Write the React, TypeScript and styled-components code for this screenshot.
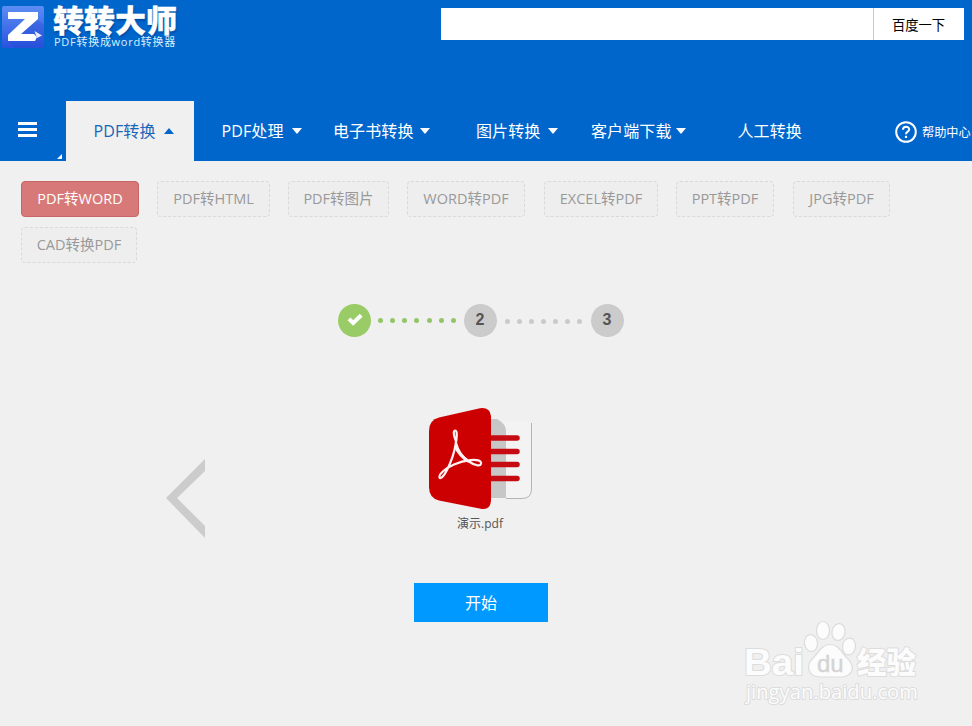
import React from 'react';
import styled, { createGlobalStyle } from 'styled-components';

const GlobalStyle = createGlobalStyle`
  * { box-sizing: border-box; }
  body {
    margin: 0;
    overflow: hidden;
    background: #f0f0f0;
    font-family: 'Open Sans', 'Noto Sans CJK SC', sans-serif;
  }
  button, input { font: inherit; margin: 0; padding: 0; }
`;

const Page = styled.div`
  position: relative;
  width: 972px;
  height: 726px;
  overflow: hidden;
  background: #f0f0f0;
`;

const Header = styled.header`
  height: 161px;
  display: flex;
  flex-direction: column;
  justify-content: space-between;
  background: #0066cc;
`;

const TopBar = styled.div`
  display: flex;
  justify-content: space-between;
  align-items: flex-start;
  padding-right: 8px;
`;

const Brand = styled.div`
  display: flex;
  padding: 5px 0 0 1px;
`;

const BrandText = styled.div`
  display: flex;
  flex-direction: column;
  margin-left: 8px;
  color: #fff;
  white-space: nowrap;
`;

const BrandName = styled.span`
  height: 29px;
  font: 900 31px/28px 'Noto Sans CJK SC', sans-serif;
  -webkit-text-stroke: 0.3px #fff;
  text-shadow: 1px 2px 2px rgba(0, 25, 90, 0.35);
`;

const BrandTagline = styled.span`
  margin-left: 1px;
  font-size: 11px;
  line-height: 15px;
  letter-spacing: 0.72px;
  color: #d9efff;
`;

const SearchBox = styled.form`
  display: flex;
  margin-top: 8px;
  width: 523px;
  height: 32px;
  background: #fff;
`;

const SearchInput = styled.input`
  width: 433px;
  border: 0;
  border-right: 1px solid #ccc;
  outline: none;
  background: #fff;
`;

const SearchButton = styled.button`
  flex: 1;
  border: 0;
  background: #fff;
  color: #000;
  font-size: 13.3px;
  padding-right: 1px;
`;

const NavBar = styled.nav`
  display: flex;
  height: 60px;
`;

const MenuToggle = styled.div`
  display: flex;
  justify-content: space-between;
  width: 66px;
  padding: 21px 4px 2px 18px;
`;

const MenuLines = styled.div`
  width: 19px;
  height: 15px;
  display: flex;
  flex-direction: column;
  justify-content: space-between;
`;

const MenuLine = styled.i`
  height: 3px;
  background: #fff;
`;

const Corner = styled.i`
  align-self: flex-end;
  border-bottom: 5px solid #fff;
  border-left: 5px solid transparent;
`;

const Tab = styled.a<{ $active?: boolean; $inset: number; $gap: number }>`
  display: flex;
  align-items: center;
  gap: ${p => p.$gap}px;
  width: 128px;
  padding-left: ${p => p.$inset}px;
  background: ${p => (p.$active ? '#f0f0f0' : 'transparent')};
  color: ${p => (p.$active ? '#1a66b8' : '#fff')};
  font-size: 16px;
  letter-spacing: 0.1px;
  white-space: nowrap;
`;

const TabLabel = styled.span`
  padding-bottom: 2px;
`;

const Caret = styled.i<{ $up?: boolean }>`
  border-left: 5px solid transparent;
  border-right: 5px solid transparent;
  ${p => (p.$up ? 'border-bottom: 6px solid #0066cc;' : 'border-top: 6px solid #fff;')}
`;

const Help = styled.a`
  display: flex;
  align-items: center;
  gap: 5px;
  margin-left: 61px;
  padding-top: 2px;
  color: #fff;
  font-size: 12.2px;
  white-space: nowrap;
`;

const Chips = styled.div`
  display: flex;
  flex-wrap: wrap;
  gap: 10px 18px;
  padding: 20px 60px 0 21px;
`;

const Chip = styled.button<{ $width: number; $indent?: number; $active?: boolean }>`
  width: ${p => p.$width}px;
  height: 36px;
  margin-left: ${p => p.$indent ?? 0}px;
  padding-bottom: 4px;
  border: 1px ${p => (p.$active ? 'solid #c86666' : 'dashed #d9d9d9')};
  border-radius: 4px;
  background: ${p => (p.$active ? '#d77979' : '#eeeeee')};
  color: ${p => (p.$active ? '#fff' : '#999')};
  font-size: 14.5px;
  white-space: nowrap;
`;

const Steps = styled.div`
  display: flex;
  align-items: center;
  width: 287px;
  height: 33px;
  margin: 40.5px 0 0 338px;
`;

const Step = styled.div<{ $done?: boolean }>`
  display: flex;
  align-items: center;
  justify-content: center;
  width: 33px;
  height: 33px;
  padding-right: 1px;
  border-radius: 50%;
  background: ${p => (p.$done ? '#99cc66' : '#cbcbcb')};
  color: #555;
  font: bold 16px 'Liberation Sans', sans-serif;
`;

const Dots = styled.div<{ $done?: boolean }>`
  display: flex;
  justify-content: space-between;
  width: ${p => (p.$done ? 93 : 94)}px;
  padding: ${p => (p.$done ? '0 8px 0 7px' : '2px 9px 0 8px')};
`;

const Dot = styled.i<{ $done?: boolean }>`
  width: 5px;
  height: 5px;
  border-radius: 50%;
  background: ${p => (p.$done ? '#93c567' : '#cacaca')};
`;

const Stage = styled.div`
  display: flex;
  height: 132px;
  margin: 70.5px 0 0 165px;
`;

const PreviousButton = styled.a`
  height: 80px;
  margin-top: 52px;
`;

const FileCard = styled.div`
  display: flex;
  flex-direction: column;
  align-items: center;
  width: 106px;
  margin-left: 222px;
`;

const FileName = styled.span`
  margin-top: 4px;
  color: #555;
  font-size: 12px;
  line-height: 18px;
`;

const StartButton = styled.button`
  display: block;
  width: 134px;
  height: 39px;
  margin: 44px 0 0 414px;
  padding-bottom: 2px;
  border: 0;
  background: #0099ff;
  color: #fff;
  font-size: 16px;
`;

const Watermark = styled.svg`
  position: absolute;
  left: 735px;
  top: 612px;
`;

const LogoMark = () => (
  <svg width="44" height="44" viewBox="0 0 44 44">
    <defs>
      <linearGradient id="tile" x2="0" y2="1">
        <stop stopColor="#5c8df3" />
        <stop offset="1" stopColor="#2953df" />
      </linearGradient>
    </defs>
    <rect x="1" y="1" width="42" height="42" rx="2" fill="url(#tile)" />
    <path d="M37 15L43 20V43H14L7 36Z" fill="#2349cc" opacity=".3" />
    <path d="M7 7H37V14L20 29H33L36 32L34 36H7V30L24 14H7Z" fill="#fff" />
    <path d="M33.5 26L41 30.5L36 33Z" fill="#e8eeff" />
  </svg>
);

const HelpIcon = () => (
  <svg width="22" height="22" viewBox="0 0 22 22" fill="none" stroke="#fff">
    <circle cx="11" cy="11" r="9.8" strokeWidth="2" />
    <path d="M8 8.8C8 4.8 14.2 4.9 14.2 8.5C14.2 10.8 11 10.5 11 13.2" strokeWidth="2" />
    <path d="M11 14.8V17" strokeWidth="2.2" />
  </svg>
);

const CheckIcon = () => (
  <svg width="17" height="14" viewBox="0 0 17 14">
    <path d="M3 5.8L7.2 10L15.2 2.3" fill="none" stroke="#fff" strokeWidth="4" />
  </svg>
);

const PdfIcon = () => (
  <svg width="106" height="104" viewBox="0 0 106 104">
    <path d="M63 14H96Q105 14 105 24V82Q105 92 95 92H63" fill="#f3f3f3" />
    <path d="M104.5 16V82Q104.5 91.5 95 91.5H79" fill="none" stroke="#b5b5b5" strokeWidth="1" />
    <path d="M61 12H70Q79 17 79 24V91H61Z" fill="#c7c7c7" />
    <path d="M62 31H90M62 44.5H90M62 57.5H90M62 71.5H90" stroke="#c60b12" strokeWidth="5.5" strokeLinecap="round" />
    <path d="M12 10.5L53 1.2Q63 0 64 9V94Q63 103 55 102L12 93.5Q2 91 2 80V24Q2 13 12 10.5Z" fill="#cc0000" />
    <g fill="none" stroke="#fff1f1" strokeLinecap="round" strokeLinejoin="round">
      <path d="M28.5 33C26 27 26.5 23.5 28.2 23.5C30.5 23.5 30 31 28.5 38C27 47 24 55 20 63C17 69 13.5 72.5 12.5 70.5C11.5 67 19 61 27 57.5C37 53 52 51 54 55.5C55 60 48 59 42 54.5C35 50 31 44 28.7 35" strokeWidth="2.2" />
      <path d="M28.5 40C32 47 36 51 41 54" strokeWidth="2.8" />
    </g>
  </svg>
);

const BaiduWatermark = () => (
  <Watermark width="190" height="100" viewBox="0 0 190 100">
    <g fill="#fcfcfc" stroke="#dcdcdc" strokeWidth="1.2">
      <ellipse cx="76" cy="31" rx="6.5" ry="8.5" transform="rotate(-8 76 31)" />
      <ellipse cx="88" cy="18.5" rx="6.5" ry="9" />
      <ellipse cx="103.5" cy="20" rx="6.5" ry="8.5" transform="rotate(10 103.5 20)" />
      <ellipse cx="114" cy="34.5" rx="6.5" ry="8.5" transform="rotate(8 114 34.5)" />
      <path d="M95 32.5C87 32.5 84 40 79 45C69 54 74 65 85 65H107C119 64 120 53 112 46C106 40 104 32.5 95 32.5Z" />
      <g paintOrder="stroke" strokeLinejoin="round" strokeWidth="2">
        <text x="9" y="62.5" fontFamily="Liberation Sans" fontWeight="700" fontSize="37" textLength="60" lengthAdjust="spacingAndGlyphs">Bai</text>
        <text x="122" y="61" fontFamily="Noto Sans CJK SC" fontWeight="900" fontSize="30" textLength="59" lengthAdjust="spacingAndGlyphs">经验</text>
        <text x="11" y="86.5" fontFamily="Open Sans" fontWeight="500" fontSize="20" textLength="172" lengthAdjust="spacingAndGlyphs">jingyan.baidu.com</text>
      </g>
      <text x="82" y="60" fontFamily="Liberation Sans" fontSize="24" fill="#d4d4d4" stroke="#d4d4d4" strokeWidth="0.4">du</text>
    </g>
  </Watermark>
);

const tabs = [
  { label: 'PDF转换', inset: 27.5, gap: 8, active: true },
  { label: 'PDF处理', inset: 27.5, gap: 8 },
  { label: '电子书转换', inset: 11, gap: 6.5 },
  { label: '图片转换', inset: 26, gap: 7.6 },
  { label: '客户端下载', inset: 13, gap: 4.5 },
  { label: '人工转换', inset: 31.5, gap: 0, plain: true },
];

const formats = [
  { label: 'PDF转WORD', width: 118, active: true },
  { label: 'PDF转HTML', width: 113 },
  { label: 'PDF转图片', width: 101 },
  { label: 'WORD转PDF', width: 118 },
  { label: 'EXCEL转PDF', width: 114, indent: 1 },
  { label: 'PPT转PDF', width: 98 },
  { label: 'JPG转PDF', width: 97, indent: 1 },
  { label: 'CAD转换PDF', width: 116 },
];

const dotSlots = Array.from({ length: 7 }, (_, i) => i);

export default function App() {
  return (
    <Page>
      <GlobalStyle />
      <Header>
        <TopBar>
          <Brand>
            <LogoMark />
            <BrandText>
              <BrandName>转转大师</BrandName>
              <BrandTagline>PDF转换成word转换器</BrandTagline>
            </BrandText>
          </Brand>
          <SearchBox>
            <SearchInput />
            <SearchButton type="button">百度一下</SearchButton>
          </SearchBox>
        </TopBar>
        <NavBar>
          <MenuToggle>
            <MenuLines>
              <MenuLine />
              <MenuLine />
              <MenuLine />
            </MenuLines>
            <Corner />
          </MenuToggle>
          {tabs.map(t => (
            <Tab key={t.label} $active={t.active} $inset={t.inset} $gap={t.gap}>
              <TabLabel>{t.label}</TabLabel>
              {!t.plain && <Caret $up={t.active} />}
            </Tab>
          ))}
          <Help>
            <HelpIcon />
            帮助中心
          </Help>
        </NavBar>
      </Header>
      <Chips>
        {formats.map(f => (
          <Chip key={f.label} $width={f.width} $indent={f.indent} $active={f.active}>
            {f.label}
          </Chip>
        ))}
      </Chips>
      <Steps>
        <Step $done>
          <CheckIcon />
        </Step>
        <Dots $done>
          {dotSlots.map(i => <Dot key={i} $done />)}
        </Dots>
        <Step>2</Step>
        <Dots>
          {dotSlots.map(i => <Dot key={i} />)}
        </Dots>
        <Step>3</Step>
      </Steps>
      <Stage>
        <PreviousButton>
          <svg width="40" height="80" viewBox="0 0 40 80">
            <path d="M40 0V12L12 39L40 67V79L1 39Z" fill="#cccccc" />
          </svg>
        </PreviousButton>
        <FileCard>
          <PdfIcon />
          <FileName>演示.pdf</FileName>
        </FileCard>
      </Stage>
      <StartButton>开始</StartButton>
      <BaiduWatermark />
    </Page>
  );
}
